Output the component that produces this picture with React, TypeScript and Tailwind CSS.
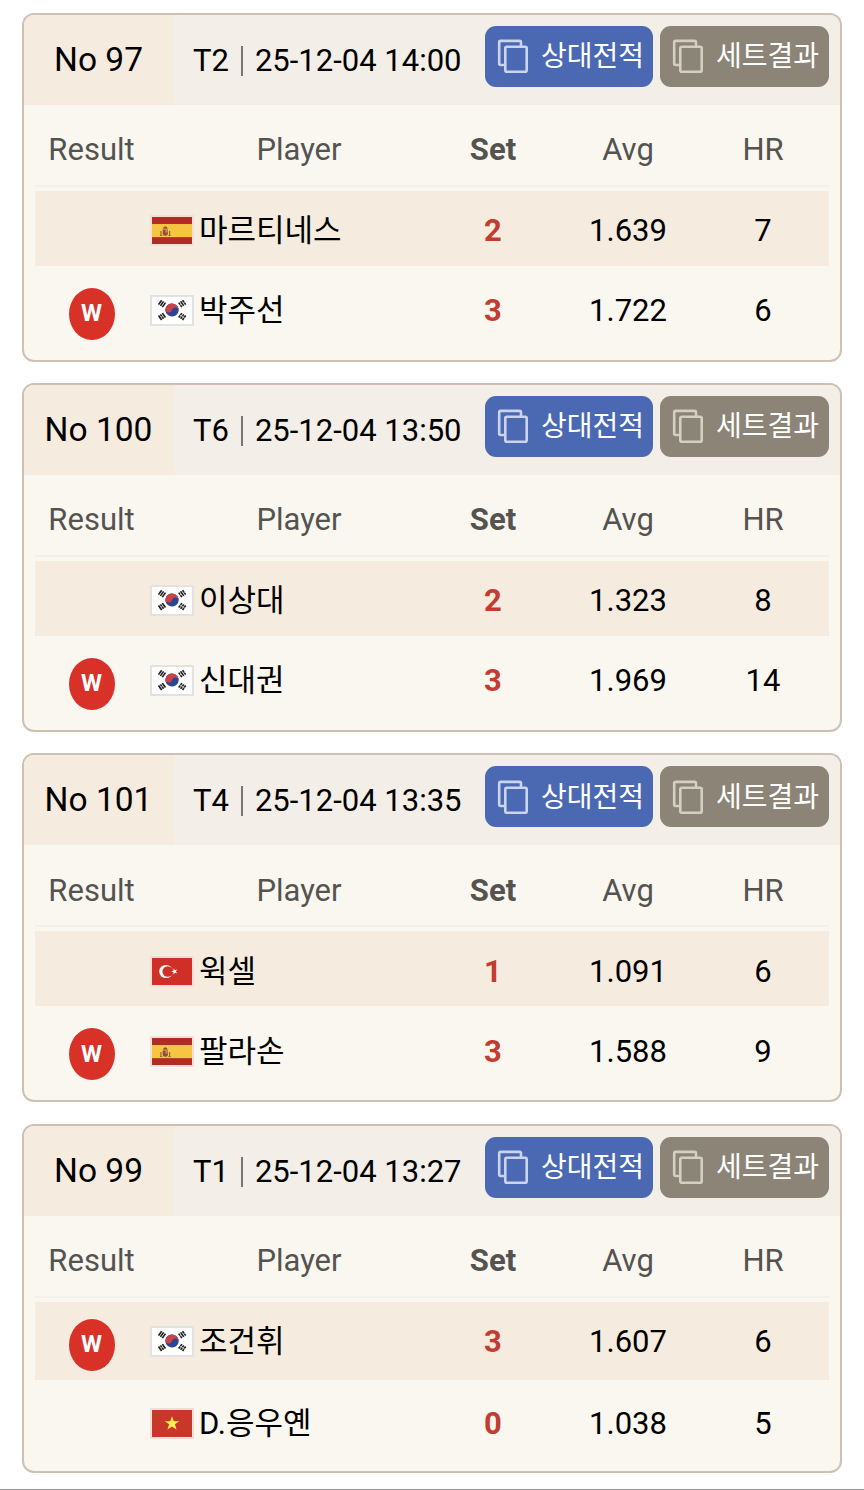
import type { ReactNode } from 'react'
import clsx from 'clsx'

type Country = 'es' | 'kr' | 'tr' | 'vn'

interface Player {
    name: string
    country: Country
    set: number
    avg: string
    hr: number
    win?: boolean
}

interface Match {
    no: number
    table: string
    date: string
    players: [Player, Player]
}

const matches: Match[] = [
    {
        no: 97,
        table: 'T2',
        date: '25-12-04 14:00',
        players: [
            { name: '마르티네스', country: 'es', set: 2, avg: '1.639', hr: 7 },
            { name: '박주선', country: 'kr', set: 3, avg: '1.722', hr: 6, win: true },
        ],
    },
    {
        no: 100,
        table: 'T6',
        date: '25-12-04 13:50',
        players: [
            { name: '이상대', country: 'kr', set: 2, avg: '1.323', hr: 8 },
            { name: '신대권', country: 'kr', set: 3, avg: '1.969', hr: 14, win: true },
        ],
    },
    {
        no: 101,
        table: 'T4',
        date: '25-12-04 13:35',
        players: [
            { name: '윅셀', country: 'tr', set: 1, avg: '1.091', hr: 6 },
            { name: '팔라손', country: 'es', set: 3, avg: '1.588', hr: 9, win: true },
        ],
    },
    {
        no: 99,
        table: 'T1',
        date: '25-12-04 13:27',
        players: [
            { name: '조건휘', country: 'kr', set: 3, avg: '1.607', hr: 6, win: true },
            { name: 'D.응우옌', country: 'vn', set: 0, avg: '1.038', hr: 5 },
        ],
    },
]

const columns = 'grid grid-cols-[113px_302px_86px_184px_86px]'

const flags: Record<Country, ReactNode> = {
    es: (
        <>
            <rect width="40" height="28" fill="#b02c24" />
            <rect y="7.3" width="40" height="13.6" fill="#f6c642" />
            <path d="M8.3 14.5h1.2V19H8.300zM17 14.500h1.200V19H17z" fill="#8d6a4c" />
            <path d="M10.700 13h5.200v3.800a2.600 2.600 0 0 1-5.200 0z" fill="#9c4a35" />
            <path d="M10.900 12.200q.4-2.600 2.400-2.600t2.400 2.600z" fill="#8a5a3c" />
            <path d="M13.300 13v3h2.300v-3z" fill="#c08a62" />
            <path d="M8 19.200h2.400M16.300 19.200h2.400" stroke="#7d5b48" strokeWidth=".8" />
        </>
    ),
    kr: (
        <>
            <rect width="40" height="28" fill="#fff" />
            <g transform="rotate(12 20 13.500)">
                <circle cx="20" cy="13.500" r="6.700" fill="#2b4595" />
                <path d="M13.300 13.500a6.700 6.700 0 0 1 13.400 0a3.350 3.350 0 0 0-6.700 0a3.350 3.350 0 0 1-6.700 0z" fill="#c94349" />
            </g>
            <g stroke="#222" strokeWidth="1.700">
                <path d="M-2.800-2.300h5.600M-2.800 0h5.600M-2.800 2.300h5.600" transform="translate(10 6.900) rotate(-56)" />
                <path d="M-2.800-2.300h2.500M.3-2.300h2.500M-2.800 0h2.500M.3 0h2.500M-2.800 2.300h2.500M.3 2.300h2.500" transform="translate(30.200 20.300) rotate(-56)" />
                <path d="M-2.800-2.300h2.500M.3-2.300h2.500M-2.800 0h5.600M-2.800 2.300h2.500M.3 2.300h2.500" transform="translate(30.200 6.900) rotate(56)" />
                <path d="M-2.800-2.300h5.600M-2.800 0h2.500M.3 0h2.500M-2.800 2.300h5.600" transform="translate(10 20.300) rotate(56)" />
            </g>
        </>
    ),
    tr: (
        <>
            <rect width="40" height="28" fill="#d02f28" />
            <circle cx="14" cy="14" r="6.800" fill="#fff" />
            <circle cx="15.800" cy="14" r="5.400" fill="#d02f28" />
            <path d="M19.300 14l2.200-.8v-2.300l1.500 1.800 2.200-.7-1.300 2 1.300 2-2.200-.7-1.500 1.800v-2.300z" fill="#fff" />
        </>
    ),
    vn: (
        <>
            <rect width="40" height="28" fill="#c9372b" />
            <path d="M20 6.500l1.800 5.200h5.400l-4.300 3.200 1.600 5.200-4.500-3.100-4.500 3.100 1.600-5.200-4.300-3.200h5.400z" fill="#fdf04b" />
        </>
    ),
}

function Flag({ country }: { country: Country }) {
    return (
        <span
            className={clsx(
                '-mt-px ml-0.5 block h-[31px] w-[44px] shrink-0 border-2',
                country === 'kr' ? 'border-[#e3e2e1]' : 'border-[#f3dfd5]',
            )}
        >
            <svg viewBox="0 0 40 28" preserveAspectRatio="none" className="block h-full w-full">
                {flags[country]}
            </svg>
        </span>
    )
}

function CopyIcon() {
    return (
        <svg width="31" height="34" viewBox="0 0 31 34" fill="none" stroke="currentColor" strokeWidth="2.600" strokeLinejoin="round">
            <path d="M7.500 26H3.700A1.500 1.500 0 0 1 2.200 24.500V3.400A1.500 1.500 0 0 1 3.700 1.900H22.500A1.500 1.500 0 0 1 24 3.400V7" />
            <rect x="8.300" y="7.700" width="21.400" height="25" rx="1.500" />
        </svg>
    )
}

function ActionButton({ label, tone }: { label: string; tone: 'blue' | 'gray' }) {
    return (
        <button
            className={clsx(
                'flex h-[61px] items-center gap-[13px] rounded-[11px] pl-3',
                tone === 'blue' ? 'w-[168px] bg-[#4a69b2]' : 'w-[169px] bg-[#8b8477]',
            )}
        >
            <span className={tone === 'blue' ? 'text-[#cbd4ec]' : 'text-[#d3cfc3]'}>
                <CopyIcon />
            </span>
            <span className="mt-0.5 text-[28px] leading-[40px] whitespace-nowrap text-white">{label}</span>
        </button>
    )
}

function PlayerRow({ player, className }: { player: Player; className: string }) {
    return (
        <div className={clsx(columns, 'items-center text-center', className)}>
            <div className="flex justify-center">
                {player.win && (
                    <span className="mt-[5px] flex h-[52px] w-[46px] items-center justify-center rounded-[50%] bg-[#d83128] pb-px text-[24px] font-bold text-white">
                        W
                    </span>
                )}
            </div>
            <div className="flex items-center gap-[5px]">
                <Flag country={player.country} />
                <span className="leading-[40px] whitespace-nowrap">{player.name}</span>
            </div>
            <div className="font-bold text-[#c33c30]">{player.set}</div>
            <div>{player.avg}</div>
            <div>{player.hr}</div>
        </div>
    )
}

function MatchCard({ match }: { match: Match }) {
    const [first, second] = match.players

    return (
        <section className="h-[349px] overflow-hidden rounded-xl border-2 border-[#cec1b3] bg-[#faf7f0]">
            {/* Match number, table and time */}
            <header className="flex h-[90px] bg-[#f3efe8]">
                <div className="flex w-[150px] items-center justify-center bg-[#f5ecdf] pr-px text-[33.5px]">
                    No {match.no}
                </div>
                <div className="flex w-[311px] items-center pt-0.5 pl-[19px] whitespace-nowrap">
                    {match.table}
                    <span className="mx-3 h-[30px] w-0.5 bg-[#777572]" />
                    {match.date}
                </div>
                <div className="flex gap-[7px] pt-[11px]">
                    <ActionButton label="상대전적" tone="blue" />
                    <ActionButton label="세트결과" tone="gray" />
                </div>
            </header>

            {/* Score table */}
            <div className="mr-[11px] ml-[11px]">
                <div className={clsx(columns, 'h-20 items-center pt-[11px] text-center text-[#555350]')}>
                    <div>Result</div>
                    <div>Player</div>
                    <div className="font-bold">Set</div>
                    <div>Avg</div>
                    <div>HR</div>
                </div>
                <div className="mb-1 h-0.5 bg-[#f3f1ec]" />
                <PlayerRow
                    player={first}
                    className={clsx('bg-[#f5ecdf]', first.win ? 'h-[78px] pt-[3px]' : 'h-[75px] pt-1.5')}
                />
                <PlayerRow player={second} className={first.win ? 'h-[89px]' : 'h-[91px]'} />
            </div>
        </section>
    )
}

export default function App() {
    return (
        <main className="h-[1490px] overflow-hidden border-b border-[#999] bg-white px-[22px] pt-[12.6px] font-[Roboto,'Noto_Sans_CJK_KR',sans-serif] text-[31px] leading-[36px] text-black">
            <div className="flex flex-col gap-[21.33px]">
                {matches.map((match) => (
                    <MatchCard key={match.no} match={match} />
                ))}
            </div>
        </main>
    )
}
